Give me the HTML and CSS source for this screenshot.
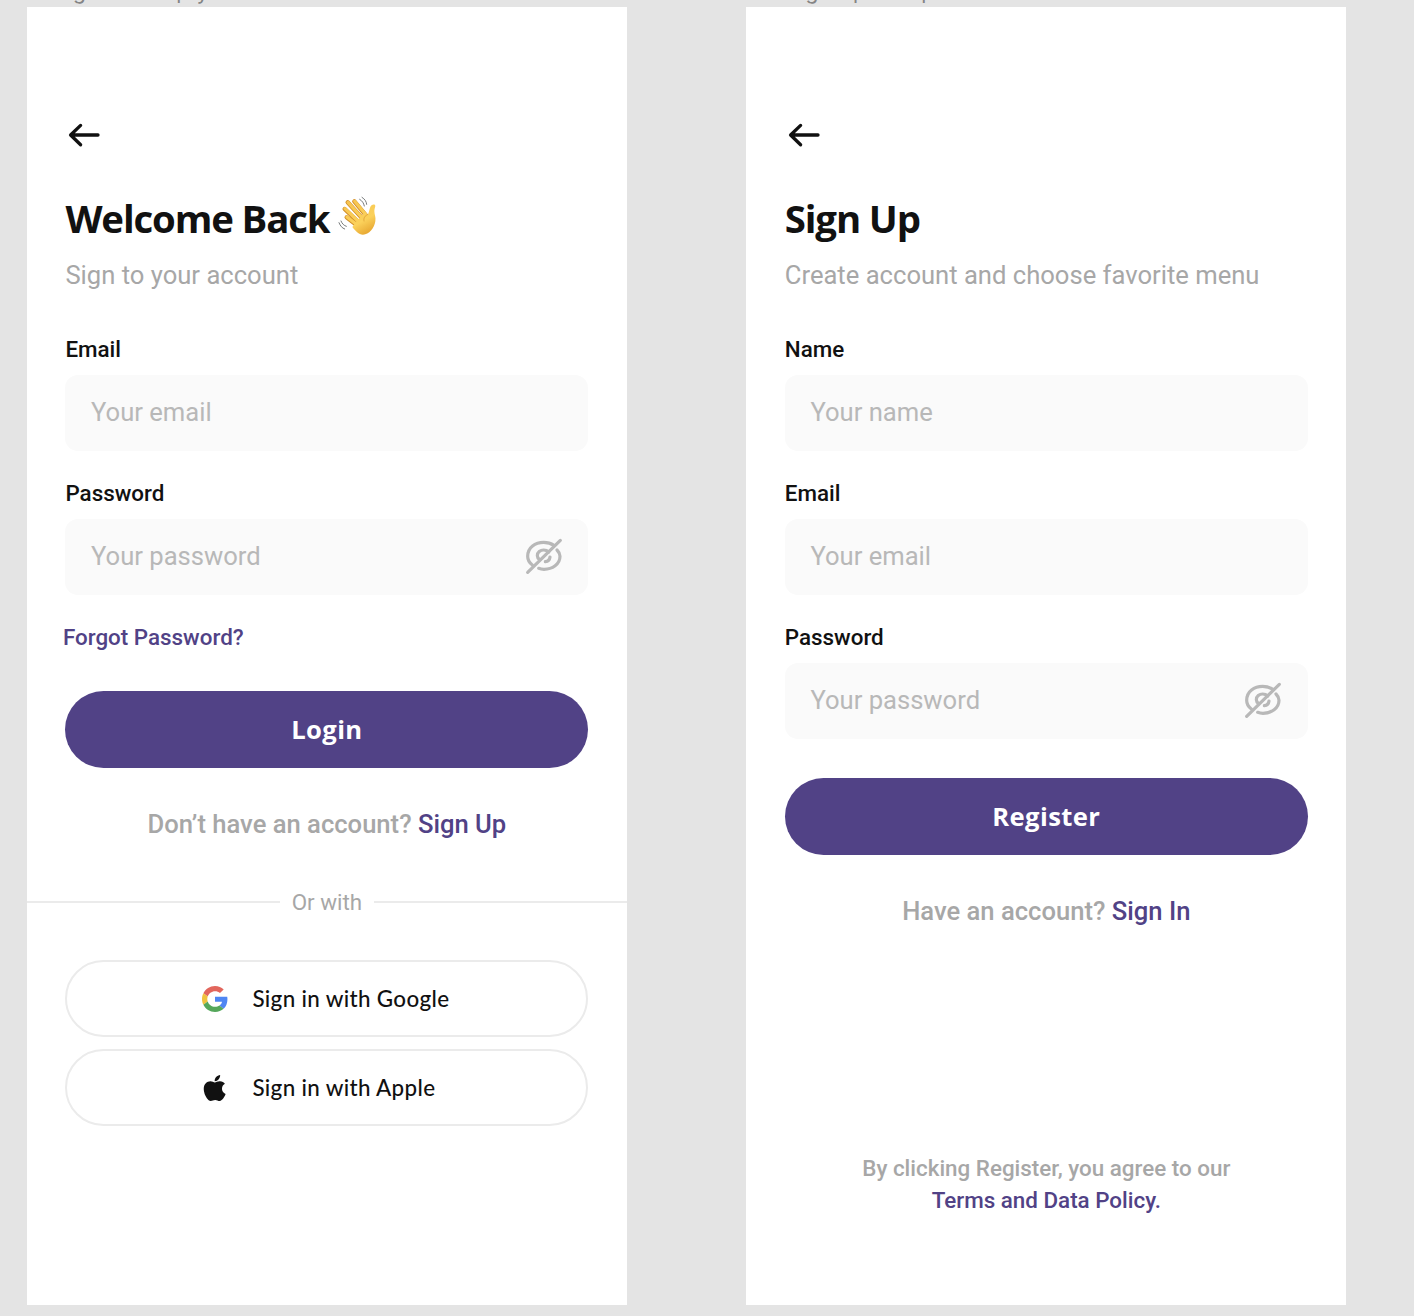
FILE: index.html
```html
<!DOCTYPE html>
<html lang="en">
<head>
<meta charset="utf-8">
<title>Sign in and sign up</title>
<link rel="stylesheet" href="styles.css">
</head>
<body>
<svg class="defs" width="0" height="0" aria-hidden="true">
  <symbol id="back" viewBox="0 0 38 38"><path d="M33 19H6M15.6 9.4L5.6 19L15.6 28.8" fill="none" stroke="currentColor" stroke-width="3.3" stroke-linecap="round" stroke-linejoin="round"/></symbol>
  <symbol id="eye-off" viewBox="0 0 114 114"><g fill="none" stroke="currentColor" stroke-width="9.6" stroke-linecap="round"><path d="M8 106L106 10"/><path d="M22 84C12 77 8 68 8 58C8 31 31 16 56 16C68 16 78 19 87 25"/><path d="M96 39C101 44 105 51 105 58C105 82 82 97 57 97C51 97 46 96 41 94"/><path d="M44 68C39 64 37 60 37 56C37 46 46 39 56 39C62 39 67 41 71 45"/><path d="M75 60C74 68 68 73 61 74"/></g></symbol>
</svg>
<main class="canvas">
  <section class="column">
    <div class="frame-name">1. Sign in - Empty</div>
    <div class="screen">
      <svg class="back"><use href="#back"/></svg>
      <h1 class="title"><span>Welcome Back</span>
        <svg class="wave" viewBox="0 0 180 150">
          <defs><linearGradient id="skin" gradientUnits="userSpaceOnUse" x1="50" y1="30" x2="110" y2="135"><stop offset="0" stop-color="#f6c34f"/><stop offset=".65" stop-color="#fbd15b"/><stop offset="1" stop-color="#e6a52f"/></linearGradient></defs>
          <g fill="none" stroke-linecap="round">
            <path d="M73 34L108 76M53 37L96 84M44 57L86 97M50 82L82 107" stroke="#d38f28" stroke-width="13"/>
            <path d="M74 34L109 76M54 37L97 84M45 56L87 96M51 81L83 106" stroke="url(#skin)" stroke-width="9.5"/>
          </g>
          <path d="M86 86L104 68L114 75L120 53C123 45 130 42 135 45C138 48 133 54 133 63C133 73 138 81 136 94C133 115 117 134 99 134C86 134 76 122 67 111Z" fill="url(#skin)"/>
          <path d="M114 73C104 77 100 84 102 93" fill="none" stroke="#dda035" stroke-width="2.4" stroke-linecap="round"/>
          <path d="M89 28C97 33 101 39 103 48M96 22C105 28 109 34 110 43M33 93C36 101 42 107 49 109M27 98C31 108 36 114 44 117" fill="none" stroke="#777a7c" stroke-width="3" stroke-linecap="round"/>
        </svg>
      </h1>
      <p class="subtitle">Sign to your account</p>
      <form class="form">
        <div class="field"><label class="label">Email</label><div class="input"><span>Your email</span></div></div>
        <div class="field"><label class="label">Password</label><div class="input"><span>Your password</span><svg class="eye"><use href="#eye-off"/></svg></div></div>
      </form>
      <a class="forgot">Forgot Password?</a>
      <div class="button button-login">Login</div>
      <p class="switch">Don’t have an account? <a>Sign Up</a></p>
      <div class="divider"><span>Or with</span></div>
      <div class="social">
        <svg class="logo" viewBox="0 0 48 48"><path fill="#e2665c" d="M24 9.5c3.54 0 6.71 1.22 9.21 3.6l6.85-6.85C35.9 2.38 30.47 0 24 0 14.62 0 6.51 5.38 2.56 13.22l7.98 6.19C12.43 13.72 17.74 9.5 24 9.5z"/><path fill="#4f86f3" d="M46.98 24.55c0-1.57-.15-3.09-.38-4.55H24v9.02h12.94c-.58 2.96-2.26 5.48-4.78 7.18l7.73 6c4.51-4.18 7.09-10.36 7.09-17.65z"/><path fill="#f0c23d" d="M10.53 28.59c-.48-1.45-.76-2.99-.76-4.59s.27-3.14.76-4.59l-7.98-6.19C.92 16.46 0 20.12 0 24c0 3.88.92 7.54 2.56 10.78l7.97-6.19z"/><path fill="#55a75b" d="M24 48c6.48 0 11.93-2.13 15.89-5.81l-7.73-6c-2.15 1.45-4.92 2.3-8.16 2.3-6.26 0-11.57-4.22-13.47-9.91l-7.98 6.19C6.51 42.62 14.62 48 24 48z"/></svg>
        <span>Sign in with Google</span>
      </div>
      <div class="social">
        <svg class="logo" viewBox="-26 32 448 448"><path fill="#111" d="M318.700 268.700c-.2-36.700 16.400-64.400 50-84.800-18.800-26.900-47.200-41.700-84.700-44.600-35.500-2.800-74.300 20.700-88.500 20.700-15 0-49.400-19.700-76.400-19.700C63.300 141.200 4 184.800 4 273.500q0 39.300 14.400 81.200c12.800 36.700 59 126.700 107.200 125.200 25.200-.6 43-17.900 75.800-17.900 31.800 0 48.300 17.900 76.400 17.900 48.600-.7 90.400-82.500 102.600-119.300-65.200-30.700-61.700-90-61.700-91.900zm-56.600-164.200c27.300-32.400 24.800-61.900 24-72.500-24.100 1.400-52 16.400-67.900 34.900-17.500 19.800-27.800 44.300-25.600 71.900 26.100 2 49.900-11.400 69.500-34.300z"/></svg>
        <span>Sign in with Apple</span>
      </div>
    </div>
  </section>
  <section class="column">
    <div class="frame-name">12. Sign Up - Step</div>
    <div class="screen">
      <svg class="back"><use href="#back"/></svg>
      <h1 class="title">Sign Up</h1>
      <p class="subtitle">Create account and choose favorite menu</p>
      <form class="form">
        <div class="field"><label class="label">Name</label><div class="input"><span>Your name</span></div></div>
        <div class="field"><label class="label">Email</label><div class="input"><span>Your email</span></div></div>
        <div class="field"><label class="label">Password</label><div class="input"><span>Your password</span><svg class="eye"><use href="#eye-off"/></svg></div></div>
      </form>
      <div class="button button-register">Register</div>
      <p class="switch">Have an account? <a>Sign In</a></p>
      <p class="terms">By clicking Register, you agree to our<br><a>Terms and Data Policy.</a></p>
    </div>
  </section>
</main>
</body>
</html>
```
FILE: styles.css
```css
* { box-sizing: border-box; }
body { margin: 0; background: #e4e4e4; font-family: Roboto, sans-serif; color: #111; }
h1, p { margin: 0; }
.defs { display: block; height: 0; }
.canvas { height: 1316px; overflow: hidden; display: flex; gap: 119.6px; padding-left: 27px; }
.column { width: 599.8px; flex: none; }
.frame-name { height: 26px; margin-top: -19px; padding-left: 6px; line-height: 21px; font-family: Inter, sans-serif; font-size: 21px; letter-spacing: .2px; color: #858585; white-space: nowrap; }
.screen { height: 1298px; background: #fff; padding: 108.8px 38.4px 0; display: flex; flex-direction: column; }
.back { width: 38px; height: 38px; flex: none; }
.title { display: flex; align-items: center; height: 51px; margin-top: 39.2px; font: 700 38.4px/51px "Open Sans", sans-serif; letter-spacing: -1.15px; white-space: nowrap; }
.wave { width: 60px; height: 50px; margin-top: -7px; }
.subtitle { height: 38.4px; margin-top: 11.6px; line-height: 38.4px; font-size: 25.6px; color: #a7a7a7; white-space: nowrap; }
.form { display: flex; flex-direction: column; gap: 25.6px; margin-top: 39px; }
.label { display: block; height: 33.6px; line-height: 33.6px; margin-bottom: 8px; font-size: 22.4px; font-weight: 500; }
.input { height: 76.8px; border-radius: 13px; background: #fafafa; display: flex; align-items: center; justify-content: space-between; padding: 0 25.6px 1.4px; font-size: 25.6px; color: #b8b8b8; }
.eye { width: 38px; height: 38px; }
.forgot { height: 34px; margin: 24.4px 0 0 -2.5px; line-height: 34px; font-size: 22.4px; font-weight: 500; color: #514286; }
.button { height: 76.8px; border-radius: 39px; background: #514286; color: #fff; font: 700 25.6px/77.6px "Open Sans", sans-serif; letter-spacing: .4px; text-align: center; }
.button-login { margin-top: 37.3px; }
.button-register { margin-top: 38.4px; }
.switch { height: 38.4px; margin-top: 37.6px; line-height: 38.4px; font-size: 25.6px; font-weight: 500; text-align: center; color: #a7a7a7; white-space: nowrap; }
.switch a, .terms a { color: #514286; }
.divider { height: 34px; margin: 41.5px -38.4px 40.4px; display: flex; align-items: center; gap: 12px; font-size: 22.4px; color: #a7a7a7; }
.divider::before, .divider::after { content: ""; height: 2px; flex: 1; background: #ebebeb; }
.social { height: 76.8px; margin-bottom: 12.8px; border: 2px solid #ebebeb; border-radius: 39px; display: flex; align-items: center; gap: 24.6px; padding: 1px 0 0 134.4px; font: 500 22.4px/32px Lato, sans-serif; letter-spacing: .34px; }
.logo { width: 26px; height: 26px; flex: none; }
.terms { margin-top: 221px; font-size: 22.4px; line-height: 32px; font-weight: 500; text-align: center; color: #a7a7a7; }
```
